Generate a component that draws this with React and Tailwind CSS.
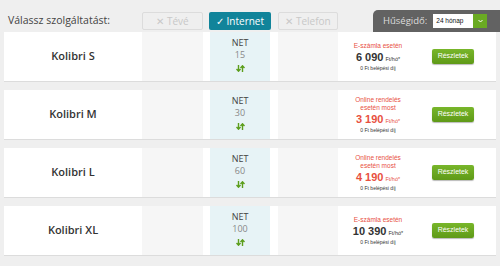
import React from "react";

const plans = [
  { name: "Kolibri S", speed: "15", note: ["E-számla esetén"], price: "6 090", red: false },
  { name: "Kolibri M", speed: "30", note: ["Online rendelés", "esetén most"], price: "3 190", red: true },
  { name: "Kolibri L", speed: "60", note: ["Online rendelés", "esetén most"], price: "4 190", red: true },
  { name: "Kolibri XL", speed: "100", note: ["E-számla esetén"], price: "10 390", red: false },
];

const Arrows = () => (
  <svg width="9" height="7" viewBox="0 0 9 7" className="mt-[6px]">
    <path d="M2.5 0 V6 M0.5 4 L2.5 6.2 L4.5 4" stroke="#5c9e1c" strokeWidth="1.4" fill="none" />
    <path d="M6.5 7 V1 M4.5 3 L6.5 0.8 L8.5 3" stroke="#5c9e1c" strokeWidth="1.4" fill="none" />
  </svg>
);

const PlanRow = ({ plan }) => (
  <div className="flex h-[49px] bg-white shadow-[0_1px_0_#dcdcdc]">
    <div className="w-[138px] flex items-center justify-center text-[11px] font-semibold text-[#333]">
      {plan.name}
    </div>
    <div className="w-[61px] bg-[#f6f6f6]" />
    <div className="w-[7px]" />
    <div className="w-[60px] bg-[#e7f3f6] flex flex-col items-center pt-[6px] leading-none">
      <span className="text-[9px] text-[#444]">NET</span>
      <span className="text-[9px] text-[#888] mt-[3px]">{plan.speed}</span>
      <Arrows />
    </div>
    <div className="w-[8px]" />
    <div className="w-[60px] bg-[#f6f6f6]" />
    <div className="w-[80px] flex flex-col items-center justify-center font-['Liberation_Sans',sans-serif] leading-none">
      {plan.note.map((n) => (
        <span key={n} className="text-[6.5px] text-[#e8503f] leading-[8px]">
          {n}
        </span>
      ))}
      <span className={`mt-[2px] flex items-baseline ${plan.red ? "text-[#e8503f]" : "text-[#333]"}`}>
        <span className="text-[11px] font-bold">{plan.price}</span>
        <span className="text-[5.5px] ml-[2px]">Ft/hó*</span>
      </span>
      <span className="text-[5px] text-[#333] mt-[3px]">0 Ft belépési díj</span>
    </div>
    <div className="flex-1 flex items-center pl-[14px]">
      <button className="w-[42px] h-[15px] rounded-[2px] bg-gradient-to-b from-[#78b62a] to-[#5f9a17] shadow-[0_1px_1px_#bbb] text-white text-[7px] font-['Liberation_Sans',sans-serif]">
        Részletek
      </button>
    </div>
  </div>
);

export default function App() {
  return (
    <div className="w-[500px] h-[266px] bg-[#efefef] font-['Open_Sans',sans-serif] overflow-hidden">
      <div className="flex items-end h-[32px] pl-[4px]">
        <div className="w-[138px] pl-[4px] pb-[3px] text-[10.5px] text-[#444]">
          Válassz szolgáltatást:
        </div>
        <div className="w-[61px] h-[18px] mb-[2px] border border-[#dcdcdc] rounded-[2px] flex items-center justify-center text-[10px] text-[#c8c8c8]">
          ✕ Tévé
        </div>
        <div className="w-[62px] h-[18px] mb-[2px] ml-[6px] rounded-[2px] bg-[#11849a] flex items-center justify-center text-[10px] text-white">
          ✓ Internet
        </div>
        <div className="w-[60px] h-[18px] mb-[2px] ml-[7px] border border-[#dcdcdc] rounded-[2px] flex items-center justify-center text-[10px] text-[#c8c8c8]">
          ✕ Telefon
        </div>
        <div className="ml-auto w-[127px] h-[22px] bg-[#626262] rounded-tl-[5px] flex items-center pl-[10px]">
          <span className="text-[9.5px] text-[#dddddd]">Hűségidő:</span>
          <div className="ml-[6px] flex h-[14px]">
            <div className="w-[40px] bg-white text-[6.5px] text-[#111] flex items-center pl-[3px] font-['Liberation_Sans',sans-serif]">
              24 hónap
            </div>
            <div className="w-[14px] bg-[#6aaa22] flex items-center justify-center">
              <svg width="5" height="4" viewBox="0 0 5 4">
                <path d="M0.5 1 L2.5 3 L4.5 1" stroke="white" strokeWidth="1" fill="none" />
              </svg>
            </div>
          </div>
        </div>
      </div>
      <div className="flex flex-col gap-[9px] mx-[4px]">
        {plans.map((p) => (
          <PlanRow key={p.name} plan={p} />
        ))}
      </div>
    </div>
  );
}
